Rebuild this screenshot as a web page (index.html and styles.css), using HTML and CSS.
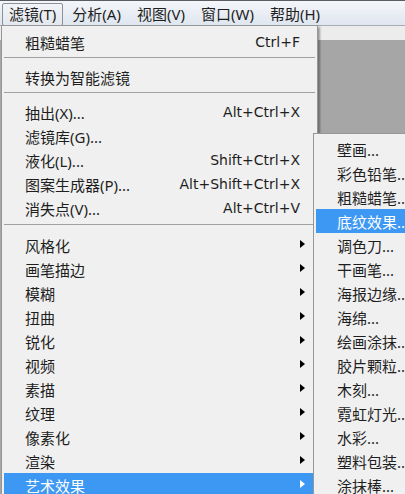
FILE: index.html
```html
<!DOCTYPE html>
<html>
<head>
<meta charset="utf-8">
<title>滤镜菜单</title>
<link rel="stylesheet" href="styles.css">
</head>
<body>

<div class="screen">

    <div class="menubar">
        <span class="mb-item active">滤镜(T)</span>
        <span class="mb-item">分析(A)</span>
        <span class="mb-item">视图(V)</span>
        <span class="mb-item">窗口(W)</span>
        <span class="mb-item">帮助(H)</span>
    </div>

    <div class="workspace">
        <div class="toolstrip"></div>
        <div class="canvas"></div>
    </div>

    <!-- 主菜单 -->
    <div class="menu main-menu">
        <div class="item"><span class="label">粗糙蜡笔</span><span class="key">Ctrl+F</span></div>
        <div class="sep"></div>
        <div class="item"><span class="label">转换为智能滤镜</span></div>
        <div class="sep"></div>
        <div class="item"><span class="label">抽出(X)...</span><span class="key">Alt+Ctrl+X</span></div>
        <div class="item"><span class="label">滤镜库(G)...</span></div>
        <div class="item"><span class="label">液化(L)...</span><span class="key">Shift+Ctrl+X</span></div>
        <div class="item"><span class="label">图案生成器(P)...</span><span class="key">Alt+Shift+Ctrl+X</span></div>
        <div class="item"><span class="label">消失点(V)...</span><span class="key">Alt+Ctrl+V</span></div>
        <div class="sep sep-wide"></div>
        <div class="item"><span class="label">风格化</span><span class="arrow"></span></div>
        <div class="item"><span class="label">画笔描边</span><span class="arrow"></span></div>
        <div class="item"><span class="label">模糊</span><span class="arrow"></span></div>
        <div class="item"><span class="label">扭曲</span><span class="arrow"></span></div>
        <div class="item"><span class="label">锐化</span><span class="arrow"></span></div>
        <div class="item"><span class="label">视频</span><span class="arrow"></span></div>
        <div class="item"><span class="label">素描</span><span class="arrow"></span></div>
        <div class="item"><span class="label">纹理</span><span class="arrow"></span></div>
        <div class="item"><span class="label">像素化</span><span class="arrow"></span></div>
        <div class="item"><span class="label">渲染</span><span class="arrow"></span></div>
        <div class="item selected"><span class="label">艺术效果</span><span class="arrow"></span></div>
    </div>

    <!-- 艺术效果 子菜单 -->
    <div class="menu sub-menu">
        <div class="item"><span class="label">壁画...</span></div>
        <div class="item"><span class="label">彩色铅笔...</span></div>
        <div class="item"><span class="label">粗糙蜡笔...</span></div>
        <div class="item selected"><span class="label">底纹效果...</span></div>
        <div class="item"><span class="label">调色刀...</span></div>
        <div class="item"><span class="label">干画笔...</span></div>
        <div class="item"><span class="label">海报边缘...</span></div>
        <div class="item"><span class="label">海绵...</span></div>
        <div class="item"><span class="label">绘画涂抹...</span></div>
        <div class="item"><span class="label">胶片颗粒...</span></div>
        <div class="item"><span class="label">木刻...</span></div>
        <div class="item"><span class="label">霓虹灯光...</span></div>
        <div class="item"><span class="label">水彩...</span></div>
        <div class="item"><span class="label">塑料包装...</span></div>
        <div class="item"><span class="label">涂抹棒...</span></div>
    </div>

</div>

</body>
</html>
```

FILE: styles.css
```css
body {
    margin: 0;
    font-family: "Noto Sans", "Noto Sans CJK SC", sans-serif;
    font-size: 15px;
    color: #1e1e1e;
    background: #3a3f38;
}

.screen {
    position: relative;
    width: 405px;
    height: 494px;
    overflow: hidden;
    display: flex;
    flex-direction: column;
}

/* 顶部菜单栏 */
.menubar {
    height: 24px;
    border-top: 1px solid #5a5e63;
    background: linear-gradient(#f4f6fa, #dfe6ef);
    display: flex;
    align-items: center;
    padding-left: 2px;
    gap: 2px;
}

.mb-item {
    height: 21px;
    line-height: 21px;
    padding: 0 6px;
    border: 1px solid transparent;
    border-radius: 2px;
    margin-top: 2px;
    white-space: nowrap;
}

.mb-item.active {
    border-color: #8b9199;
    background: linear-gradient(#f2f4f7, #e3e8ee);
}

.workspace {
    flex: 1;
    display: flex;
    flex-direction: column;
    border-top: 1px solid #a9adb2;
}

.toolstrip {
    height: 14px;
    background: #ececec;
}

.canvas {
    flex: 1;
    background: #a6a6a6;
}

/* 弹出菜单 */
.menu {
    position: absolute;
    box-sizing: border-box;
    background: #f0f0f0;
    border: 1px solid #979797;
    padding: 4px 2px;
    box-shadow: 2px 2px 2px rgba(0, 0, 0, 0.35);
}

.main-menu {
    left: 1px;
    top: 25px;
    width: 317px;
    height: 500px;
}

.sub-menu {
    left: 313px;
    top: 133px;
    width: 130px;
    height: 400px;
    padding-top: 3px;
}

.item {
    height: 24px;
    display: flex;
    align-items: center;
    padding: 0 10px 0 21px;
    white-space: nowrap;
}

.item .key {
    margin-left: auto;
    margin-right: 5px;
    font-family: "DejaVu Sans", sans-serif;
    font-size: 14px;
}

.item .arrow {
    margin-left: auto;
    margin-bottom: 3px;
    width: 0;
    height: 0;
    border-left: 5px solid #000;
    border-top: 4.5px solid transparent;
    border-bottom: 4.5px solid transparent;
}

.item.selected {
    background: #3d98f4;
    color: #fff;
}

.item.selected .arrow {
    border-left-color: #fff;
}

.sub-menu .item {
    padding-left: 21px;
}

.sep {
    height: 1px;
    background: #a0a0a0;
    margin: 3px 0 7px 0;
}

.sep-wide {
    margin: 4px 0 8px 0;
}
```
